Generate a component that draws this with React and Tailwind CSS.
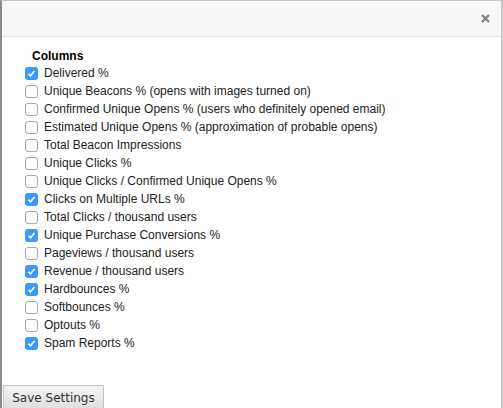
import { useState } from 'react';

const columns = [
  { label: 'Delivered %', checked: true },
  { label: 'Unique Beacons % (opens with images turned on)', checked: false },
  { label: 'Confirmed Unique Opens % (users who definitely opened email)', checked: false },
  { label: 'Estimated Unique Opens % (approximation of probable opens)', checked: false },
  { label: 'Total Beacon Impressions', checked: false },
  { label: 'Unique Clicks %', checked: false },
  { label: 'Unique Clicks / Confirmed Unique Opens %', checked: false },
  { label: 'Clicks on Multiple URLs %', checked: true },
  { label: 'Total Clicks / thousand users', checked: false },
  { label: 'Unique Purchase Conversions %', checked: true },
  { label: 'Pageviews / thousand users', checked: false },
  { label: 'Revenue / thousand users', checked: true },
  { label: 'Hardbounces %', checked: true },
  { label: 'Softbounces %', checked: false },
  { label: 'Optouts %', checked: false },
  { label: 'Spam Reports %', checked: true },
];

function Box({ checked, onClick }) {
  return (
    <span
      onClick={onClick}
      className={`flex h-[13px] w-[13px] shrink-0 items-center justify-center rounded-[3px] ${
        checked ? 'bg-[#3b99fc]' : 'border border-[#a9a9a9] bg-white'
      }`}
    >
      {checked && (
        <svg width="9" height="9" viewBox="0 0 9 9">
          <path d="M1.5 4.8 L3.6 6.8 L7.5 2" fill="none" stroke="white" strokeWidth="1.6" />
        </svg>
      )}
    </span>
  );
}

export default function App() {
  const [state, setState] = useState(columns.map((c) => c.checked));

  const toggle = (i) => {
    const next = [...state];
    next[i] = !next[i];
    setState(next);
  };

  return (
    <div className="h-[408px] w-[503px] overflow-hidden bg-white font-['Liberation_Sans',Arial,sans-serif] text-[#222]">
      <div className="flex h-full flex-col border-l-2 border-r-2 border-t border-l-[#8c8c8c] border-r-[#c8c8c8] border-t-[#c8c8c8]">
        {/* Header */}
        <div className="flex h-[36px] shrink-0 items-center justify-end border-b border-[#e2e2e2] bg-[#f7f7f7] pr-[11px]">
          <svg width="9" height="9" viewBox="0 0 9 9">
            <path d="M1 1 L8 8 M8 1 L1 8" stroke="#8a8282" strokeWidth="2.4" />
          </svg>
        </div>

        {/* Columns */}
        <div className="flex-1 pl-[23px] pt-[11px]">
          <div className="pl-[7px] text-[12px] font-bold leading-[16px] text-black">Columns</div>
          <div className="flex flex-col">
            {columns.map((col, i) => (
              <label key={i} className="flex h-[18px] cursor-pointer items-center gap-[6px]">
                <Box checked={state[i]} onClick={() => toggle(i)} />
                <span className="text-[12px] leading-[18px]">{col.label}</span>
              </label>
            ))}
          </div>
        </div>

        {/* Footer */}
        <div className="-mb-[2px] shrink-0">
          <button className="ml-px h-[25px] w-[101px] border border-[#c4c4c4] bg-gradient-to-b from-[#f4f4f4] to-[#dedede] font-['DejaVu_Sans',Verdana,sans-serif] text-[12px] text-[#333]">
            Save Settings
          </button>
        </div>
      </div>
    </div>
  );
}
